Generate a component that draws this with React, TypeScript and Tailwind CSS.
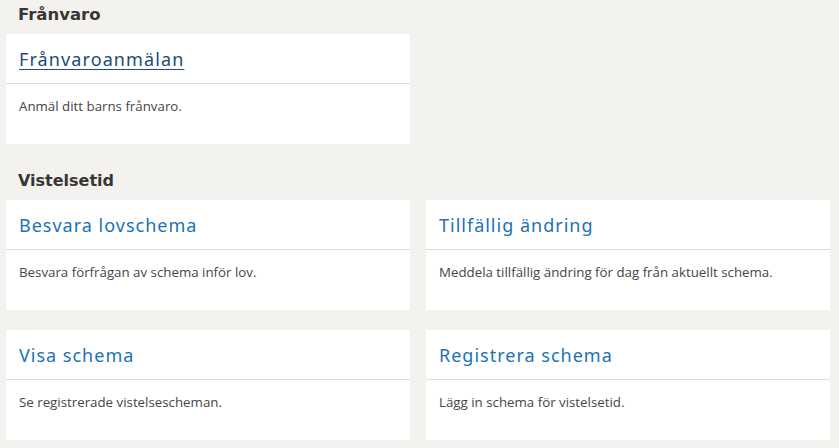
import React from 'react';

interface CardProps {
  title: string;
  text: string;
  visited?: boolean;
}

const Card: React.FC<CardProps> = ({ title, text, visited }) => (
  <div className="bg-white h-[110px] flex flex-col">
    <div className="h-[50px] px-[13px] flex items-center border-b border-[#dcdcdc]">
      <a
        href="#"
        className={
          visited
            ? "text-[18px] leading-none tracking-[1.1px] text-[#1d4c79] underline underline-offset-[3px] decoration-1 font-['Noto_Sans',sans-serif]"
            : "text-[18px] leading-none tracking-[1px] text-[#1b72b8] font-['Noto_Sans',sans-serif]"
        }
      >
        {title}
      </a>
    </div>
    <p className="px-[13px] pt-[13px] text-[13.3px] text-[#464646] font-['Open_Sans',sans-serif]">{text}</p>
  </div>
);

const App: React.FC = () => {
  return (
    <div className="min-h-[448px] w-[839px] bg-[#f3f2ee] pl-[6px] pr-[9px] pb-[8px]">
      <h2 className="h-[34px] flex items-center pl-[12px] pt-[2px] pb-[6px] text-[16.5px] font-bold text-[#383634] font-['DejaVu_Sans',sans-serif]">
        Frånvaro
      </h2>
      <div className="grid grid-cols-2 gap-x-4">
        <Card title="Frånvaroanmälan" text="Anmäl ditt barns frånvaro." visited />
      </div>
      <h2 className="h-[56px] flex items-center pl-[12px] pt-[22px] pb-[4px] text-[16px] font-bold text-[#383634] font-['DejaVu_Sans',sans-serif]">
        Vistelsetid
      </h2>
      <div className="grid grid-cols-2 gap-x-4 gap-y-5">
        <Card title="Besvara lovschema" text="Besvara förfrågan av schema inför lov." />
        <Card title="Tillfällig ändring" text="Meddela tillfällig ändring för dag från aktuellt schema." />
        <Card title="Visa schema" text="Se registrerade vistelsescheman." />
        <Card title="Registrera schema" text="Lägg in schema för vistelsetid." />
      </div>
    </div>
  );
};

export default App;
